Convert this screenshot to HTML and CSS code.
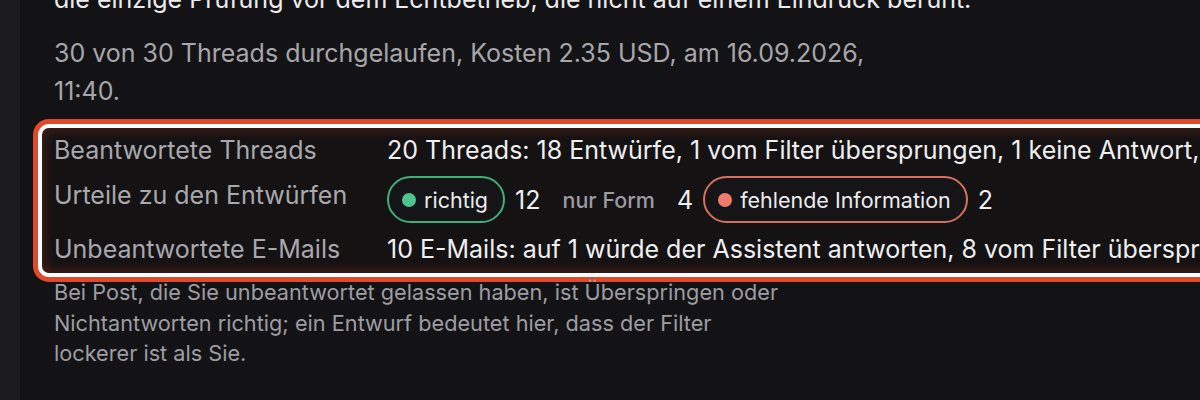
FILE: index.html
```html
<!DOCTYPE html>
<html lang="de">
<head>
<meta charset="utf-8">
<title>Auswertung</title>
<link rel="stylesheet" href="styles.css">
</head>
<body>
<div class="page">
  <aside class="rail"></aside>
  <main class="content">
    <p class="lead">die einzige Prüfung vor dem Echtbetrieb, die nicht auf einem Eindruck beruht.</p>
    <p class="meta">30 von 30 Threads durchgelaufen, Kosten 2.35 USD, am 16.09.2026, 11:40.</p>
    <div class="summary">
      <div class="label">Beantwortete Threads</div>
      <div class="value">20 Threads: 18 Entwürfe, 1 vom Filter übersprungen, 1 keine Antwort, 0 Fehler</div>
      <div class="label">Urteile zu den Entwürfen</div>
      <div class="value verdicts">
        <span class="pill pill-ok"><span class="dot"></span>richtig</span>
        <span class="count">12</span>
        <span class="pill pill-plain">nur Form</span>
        <span class="count">4</span>
        <span class="pill pill-bad"><span class="dot"></span>fehlende Information</span>
        <span class="count">2</span>
      </div>
      <div class="label">Unbeantwortete E-Mails</div>
      <div class="value">10 E-Mails: auf 1 würde der Assistent antworten, 8 vom Filter übersprungen, 1 keine Antwort</div>
    </div>
    <p class="note">Bei Post, die Sie unbeantwortet gelassen haben, ist Überspringen oder Nichtantworten richtig; ein Entwurf bedeutet hier, dass der Filter lockerer ist als Sie.</p>
  </main>
</div>
</body>
</html>
```
FILE: styles.css
```css
html, body {
  margin: 0;
  padding: 0;
  background: #131315;
  overflow: hidden;
  height: 400px;
}

.page {
  display: flex;
  min-height: 400px;
  font-family: Inter, "Noto Sans", sans-serif;
}

.rail {
  flex: 0 0 20px;
  background: #1c1c1f;
}

.content {
  flex: 1;
  padding-left: 34px;
  min-width: 0;
}

.lead {
  margin: -20px 0 0;
  font-size: 25px;
  line-height: 38px;
  color: #ececee;
  white-space: nowrap;
}

.meta {
  margin: 16px 0 0;
  max-width: 840px;
  font-size: 25px;
  line-height: 38px;
  color: #a6a6ab;
}

.summary {
  margin: 18px 0 0 -12px;
  padding: 3px 12px 5px;
  width: max-content;
  display: grid;
  grid-template-columns: 333px auto;
  row-gap: 7px;
  align-items: start;
  border-radius: 7px;
  background: #141213;
  box-shadow:
    0 0 0 4px #ffffff,
    0 0 0 9px #df4a2c,
    inset 0 0 14px rgba(170, 55, 30, 0.45);
}

.label {
  font-size: 25px;
  line-height: 38px;
  color: #a8a8ad;
  white-space: nowrap;
}

.value {
  font-size: 25px;
  line-height: 38px;
  color: #efeff0;
  white-space: nowrap;
}

.verdicts {
  display: flex;
  align-items: center;
  gap: 10px;
}

.pill {
  display: inline-flex;
  align-items: center;
  gap: 8px;
  height: 47px;
  box-sizing: border-box;
  padding: 0 15px 0 13px;
  border-radius: 24px;
  border: 2px solid transparent;
  font-size: 21.5px;
  color: #ececee;
  background: #151517;
}

.pill-ok { border-color: #3fae7b; }
.pill-bad { border-color: #d7705f; }

.pill-plain {
  padding: 0 12px;
  border: 0;
  background: transparent;
  color: #9c9ca2;
  font-weight: 500;
}

.dot {
  width: 14px;
  height: 14px;
  border-radius: 50%;
}

.pill-ok .dot { background: #4cc48b; }
.pill-bad .dot { background: #ef7c6b; }

.count {
  font-size: 25px;
  color: #efeff0;
}

.note {
  margin: 4px 0 0;
  max-width: 732px;
  font-size: 21.7px;
  line-height: 30.5px;
  color: #9d9da3;
}
```
